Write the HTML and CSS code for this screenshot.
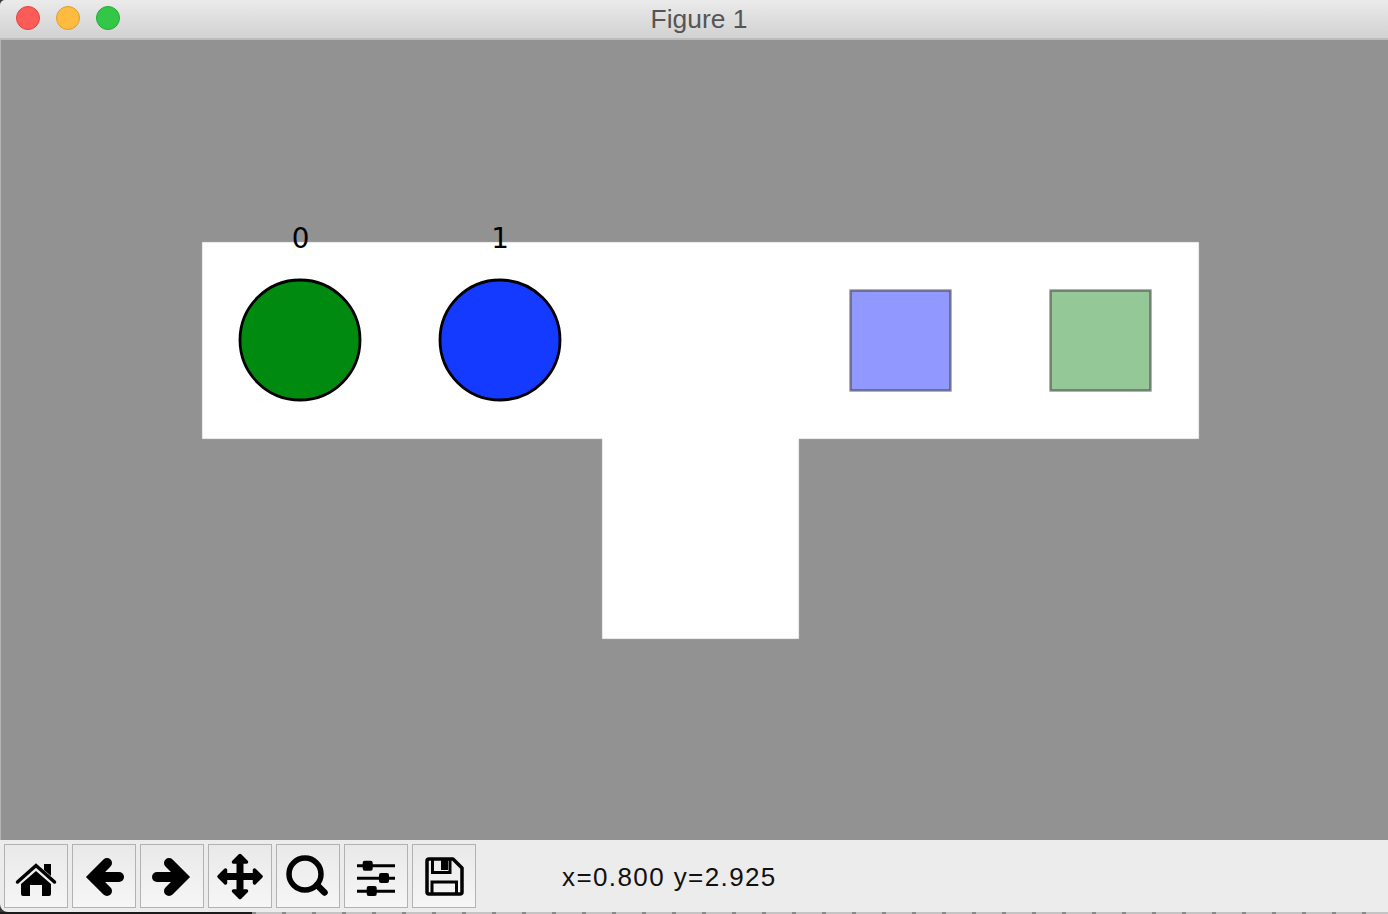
FILE: index.html
```html
<!DOCTYPE html>
<html lang="en">
<head>
<meta charset="utf-8">
<title>Figure 1</title>
<link rel="stylesheet" href="styles.css">
</head>
<body>
<div class="window">
  <header class="titlebar">
    <div class="lights">
      <span class="light red"></span>
      <span class="light yellow"></span>
      <span class="light green"></span>
    </div>
    <div class="title">Figure 1</div>
  </header>
  <main class="figure">
    <svg class="canvas" width="1388" height="800" viewBox="0 0 1388 800">
      <rect class="edge" x="0" y="0" width="1" height="800"/>
      <path class="axes" d="M202 202H1199V399H799V599H602V399H202Z"/>
      <circle class="dot dot-green" cx="300" cy="300" r="60"/>
      <circle class="dot dot-blue" cx="500" cy="300" r="60"/>
      <rect class="swatch swatch-blue" x="850.5" y="250.5" width="100" height="100"/>
      <rect class="swatch swatch-green" x="1050.5" y="250.5" width="100" height="100"/>
      <text class="label" x="300.500" y="208">0</text>
      <text class="label" x="500" y="208">1</text>
    </svg>
  </main>
  <footer class="toolbar">
    <div class="tools">
      <button class="tool" aria-label="Home">
        <svg class="icon" viewBox="0 0 64 64" width="64" height="64">
          <path class="fill" d="M40 20h7v12l-7-6z"/>
          <path class="line-roof" d="M13.500 38L32 21.500L50.500 38"/>
          <path class="fill" d="M32 27L47 40V50a2 2 0 0 1-2 2H38V41H26V52H19a2 2 0 0 1-2-2V40Z"/>
        </svg>
      </button>
      <button class="tool" aria-label="Back">
        <svg class="icon" viewBox="0 0 64 64" width="64" height="64">
          <path class="arrow" d="M35 19L21 33L35 47"/>
          <path class="shaft" d="M22 33H47"/>
        </svg>
      </button>
      <button class="tool" aria-label="Forward">
        <svg class="icon" viewBox="0 0 64 64" width="64" height="64">
          <path class="arrow" d="M29 19L43 33L29 47"/>
          <path class="shaft" d="M42 33H17"/>
        </svg>
      </button>
      <button class="tool" aria-label="Pan">
        <svg class="icon" viewBox="0 0 64 64" width="64" height="64">
          <path class="move-shaft" d="M16 32.500H48M32 16.500V48.500"/>
          <path class="fill-round" d="M11 32.500L17.500 26V39Z"/>
          <path class="fill-round" d="M53 32.500L46.500 26V39Z"/>
          <path class="fill-round" d="M32 11.500L25.500 18H38.500Z"/>
          <path class="fill-round" d="M32 53.500L25.500 47H38.500Z"/>
        </svg>
      </button>
      <button class="tool" aria-label="Zoom">
        <svg class="icon" viewBox="0 0 64 64" width="64" height="64">
          <circle class="lens" cx="29" cy="30" r="16"/>
          <path class="handle" d="M41 41L48.500 48.500"/>
        </svg>
      </button>
      <button class="tool" aria-label="Configure">
        <svg class="icon" viewBox="0 0 64 64" width="64" height="64">
          <path class="slider" d="M13 21.700H51M13 34.300H51M13 47.300H51"/>
          <rect class="fill" x="18.700" y="16.700" width="10" height="10" rx="2"/>
          <rect class="fill" x="35" y="29" width="10" height="10" rx="2"/>
          <rect class="fill" x="22.700" y="42" width="10" height="10" rx="2"/>
        </svg>
      </button>
      <button class="tool" aria-label="Save">
        <svg class="icon" viewBox="0 0 64 64" width="64" height="64">
          <path class="outline" d="M17 15H41L50 24V48a2 2 0 0 1-2 2H17a2 2 0 0 1-2-2V17a2 2 0 0 1 2-2Z"/>
          <path class="outline-thin" d="M20.500 15V28.500H38V16"/>
          <path class="outline-thin" d="M20 50V38H44.500V50"/>
          <rect class="fill" x="29" y="16" width="7" height="10"/>
        </svg>
      </button>
    </div>
    <div class="status">x=0.800 y=2.925</div>
  </footer>
</div>
<div class="behind">
  <div class="behind-dark"></div>
  <div class="behind-light"></div>
</div>
</body>
</html>
```

FILE: styles.css
```css
html, body {
  margin: 0;
  padding: 0;
}

body {
  width: 1388px;
  height: 914px;
  overflow: hidden;
  background: #3a3a3a;
}

.window {
  width: 1388px;
  height: 912px;
  display: flex;
  flex-direction: column;
  overflow: hidden;
  border-radius: 5px 0 0 8px;
}

.titlebar {
  flex: none;
  box-sizing: border-box;
  height: 40px;
  display: grid;
  grid-template-columns: 1fr auto 1fr;
  align-items: center;
  background: linear-gradient(#ebebeb, #d1d1d1);
  border-bottom: 2px solid #bcbcbc;
}

.lights {
  display: flex;
  gap: 16px;
  padding-left: 16px;
  margin-top: -3px;
}

.light {
  box-sizing: border-box;
  width: 24px;
  height: 24px;
  border-radius: 50%;
  border: 1px solid;
}

.red { background: #fc5c57; border-color: #e0443e; }
.yellow { background: #fdbc3f; border-color: #e09e2d; }
.green { background: #33c748; border-color: #25a936; }

.title {
  font-family: "Liberation Sans", Arial, sans-serif;
  font-size: 26.4px;
  line-height: 38px;
  padding-left: 10px;
  color: #555555;
}

.figure {
  flex: none;
  height: 800px;
  background: #929292;
}

.canvas {
  display: block;
}

.edge { fill: #b4b4b4; }
.axes { fill: #ffffff; stroke: #a8a8a8; stroke-width: 0.5; }

.dot { stroke: #000000; stroke-width: 2.8; }
.dot-green { fill: #008b10; }
.dot-blue { fill: #1439ff; }

.swatch { stroke: rgba(0, 0, 0, 0.43); stroke-width: 2.4; }
.swatch-blue { fill: #0f1fff; fill-opacity: 0.46; }
.swatch-green { fill: #007d08; fill-opacity: 0.42; }

.label {
  font-family: "DejaVu Sans", sans-serif;
  font-size: 27.8px;
  fill: #000000;
  text-anchor: middle;
}

.toolbar {
  flex: none;
  height: 72px;
  display: flex;
  align-items: flex-start;
  background: #ececec;
}

.tools {
  display: flex;
  gap: 4px;
  padding: 4px 0 0 4px;
}

.tool {
  box-sizing: border-box;
  width: 64px;
  height: 64px;
  padding: 0;
  display: flex;
  align-items: center;
  justify-content: center;
  border: 1px solid #b2b2b2;
  border-radius: 0;
  background: linear-gradient(#e9e9e9, #f6f6f6);
}

.icon {
  flex: none;
  display: block;
}

.fill { fill: #000000; }
.fill-round { fill: #000000; stroke: #000000; stroke-width: 3.500; stroke-linejoin: round; }
.line-roof { fill: none; stroke: #000000; stroke-width: 3.500; stroke-linecap: round; }
.arrow { fill: none; stroke: #000000; stroke-width: 10; stroke-linecap: round; stroke-linejoin: miter; }
.shaft { fill: none; stroke: #000000; stroke-width: 10; stroke-linecap: round; }
.move-shaft { fill: none; stroke: #000000; stroke-width: 7; }
.lens { fill: none; stroke: #000000; stroke-width: 5.500; }
.handle { fill: none; stroke: #000000; stroke-width: 6.500; stroke-linecap: round; }
.slider { fill: none; stroke: #000000; stroke-width: 3; }
.outline { fill: none; stroke: #000000; stroke-width: 3.500; stroke-linejoin: round; }
.outline-thin { fill: none; stroke: #000000; stroke-width: 3; }

.status {
  margin-left: 86px;
  font-family: "Liberation Sans", Arial, sans-serif;
  font-size: 26px;
  line-height: 74px;
  letter-spacing: 1.4px;
  color: #111111;
  white-space: nowrap;
}

.behind {
  height: 2px;
  display: flex;
}

.behind-dark {
  width: 252px;
  background: #1c1c1c;
}

.behind-light {
  flex: 1;
  background: repeating-linear-gradient(90deg, #8a8a8a 0 4px, #c4c4c4 4px 30px);
}
```
